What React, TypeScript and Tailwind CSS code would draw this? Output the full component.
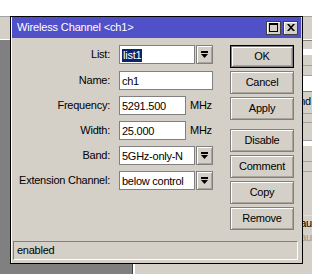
import React from "react";

const btnRaised =
  "bg-[#d4d0c8] border border-[#808080] shadow-[inset_1px_1px_0_#ffffff,inset_-1px_-1px_0_#a8a49c]";

function DropGlyph() {
  return (
    <svg width="7" height="7" viewBox="0 0 7 7" className="block">
      <rect x="0" y="0" width="7" height="2" fill="#000" />
      <polygon points="0,3 7,3 3.5,7" fill="#000" />
    </svg>
  );
}

function DropBtn() {
  return (
    <div className={`w-[17px] h-[19px] ml-[1px] flex items-center justify-center ${btnRaised}`}>
      <DropGlyph />
    </div>
  );
}

function Label({ children }: { children: React.ReactNode }) {
  return <div className="w-[100px] text-right pr-[1px] leading-[19px] whitespace-nowrap">{children}</div>;
}

const inputBox = "h-[19px] bg-white border border-[#808080] flex items-center pl-[2px] pt-[1px] leading-none whitespace-nowrap";

function Btn({ children, def }: { children: React.ReactNode; def?: boolean }) {
  if (def) {
    return (
      <div className="w-[64px] h-[23px] border border-black">
        <div className={`w-full h-full flex items-center justify-center ${btnRaised}`}>{children}</div>
      </div>
    );
  }
  return <div className={`w-[64px] h-[23px] flex items-center justify-center ${btnRaised}`}>{children}</div>;
}

export default function App() {
  return (
    <div className="relative w-[312px] h-[274px] overflow-hidden bg-[#d4d0c8] font-['Liberation_Sans',Arial,sans-serif] text-[11px] tracking-[-0.25px] text-black">
      {/* desktop background */}
      <div className="flex flex-col h-full">
        <div className="h-[16px] bg-white shrink-0" />
        <div className="h-[25px] shrink-0 bg-[#d4d0c8] border-t border-[#a0a0a0] border-b border-b-[#808080] shadow-[inset_0_-1px_0_#ffffff]" />
        <div className="flex flex-1">
          <div className="w-[136px] bg-[#808080] border-r border-[#404040]" />
          <div className="flex-1 flex flex-col bg-[#d4d0c8] border-l-2 border-white">
            <div className="h-[8px] border-b border-[#d4d0c8]" />
            <div className="h-[6px] bg-white" />
            <div className="h-[11px] border-b border-[#a0a0a0]" />
            <div className="h-[10px] border-b border-[#a0a0a0]" />
            <div className="h-[16px] bg-white border-b border-[#808080]" />
            <div className="h-[18px] pl-[164px] leading-[18px] whitespace-nowrap">nd</div>
            <div className="h-[4px] border-b border-[#a0a0a0]" />
            <div className="h-[9px] border-b border-[#a0a0a0]" />
            <div className="h-[18px] border-b border-[#a0a0a0]" />
            <div className="h-[5px] bg-white" />
            <div className="h-[16px] border-b border-[#a0a0a0]" />
            <div className="h-[10px] border-b border-[#a0a0a0]" />
            <div className="h-[44px] border-b border-[#e0ded8]" />
            <div className="h-[14px] pl-[165px] leading-[14px] whitespace-nowrap">au</div>
            <div className="h-[14px] pl-[165px] leading-[14px] whitespace-nowrap text-[#9c9890]">au</div>
          </div>
        </div>
      </div>

      {/* dialog window */}
      <div className="absolute left-[10px] top-[16px] w-[293px] h-[248px] border border-black bg-[#d4d0c8] flex flex-col shadow-[inset_1px_1px_0_#ffffff]">
        <div className="h-[21px] mx-[1px] bg-[#5050c8] flex items-center pl-[5px] pr-[3px] text-white shrink-0">
          <div className="flex-1 whitespace-nowrap leading-none tracking-[-0.15px]">Wireless Channel &lt;ch1&gt;</div>
          <div className="flex gap-[2px]">
            <div className="w-[15px] h-[14px] bg-[#d4d0c8] border border-[#404040] shadow-[inset_1px_1px_0_#ffffff] flex items-center justify-center">
              <svg width="9" height="9" viewBox="0 0 9 9" className="block">
                <rect x="0.5" y="0.5" width="8" height="8" fill="none" stroke="#000" />
                <rect x="0" y="0" width="9" height="2" fill="#000" />
              </svg>
            </div>
            <div className="w-[15px] h-[14px] bg-[#d4d0c8] border border-[#404040] shadow-[inset_1px_1px_0_#ffffff] flex items-center justify-center">
              <svg width="8" height="7" viewBox="0 0 8 7" className="block">
                <path d="M0 0 L2 0 L4 2.2 L6 0 L8 0 L5 3.5 L8 7 L6 7 L4 4.8 L2 7 L0 7 L3 3.5 Z" fill="#000" />
              </svg>
            </div>
          </div>
        </div>

        <div className="flex pt-[7px] pr-[8px]">
          <div className="flex flex-col gap-[6px] w-[210px]">
            <div className="flex items-center mb-[1px]">
              <Label>List:</Label>
              <div className="ml-[8px] flex">
                <div className={`w-[76px] ${inputBox}`}>
                  <span className="bg-[#0a246a] text-white px-[1px] leading-[13px]">list1</span>
                </div>
                <DropBtn />
              </div>
            </div>
            <div className="flex items-center">
              <Label>Name:</Label>
              <div className={`ml-[8px] w-[94px] ${inputBox}`}>ch1</div>
            </div>
            <div className="flex items-center">
              <Label>Frequency:</Label>
              <div className={`ml-[8px] w-[67px] ${inputBox}`}>5291.500</div>
              <div className="ml-[4px]">MHz</div>
            </div>
            <div className="flex items-center">
              <Label>Width:</Label>
              <div className={`ml-[8px] w-[67px] ${inputBox}`}>25.000</div>
              <div className="ml-[4px]">MHz</div>
            </div>
            <div className="flex items-center">
              <Label>Band:</Label>
              <div className="ml-[8px] flex">
                <div className={`w-[76px] ${inputBox}`}>5GHz-only-N</div>
                <DropBtn />
              </div>
            </div>
            <div className="flex items-center">
              <Label>Extension Channel:</Label>
              <div className="ml-[8px] flex">
                <div className={`w-[76px] ${inputBox}`}>below control</div>
                <DropBtn />
              </div>
            </div>
          </div>

          <div className="ml-auto flex flex-col gap-[3px]">
            <Btn def>OK</Btn>
            <Btn>Cancel</Btn>
            <Btn>Apply</Btn>
            <div className="mt-[6px]">
              <Btn>Disable</Btn>
            </div>
            <Btn>Comment</Btn>
            <Btn>Copy</Btn>
            <Btn>Remove</Btn>
          </div>
        </div>

        <div className="mt-auto mb-[3px] ml-[2px] mr-[4px] h-[19px] border border-[#808080] border-b-white border-r-white flex items-center pl-[3px] leading-none">
          enabled
        </div>
      </div>
    </div>
  );
}
